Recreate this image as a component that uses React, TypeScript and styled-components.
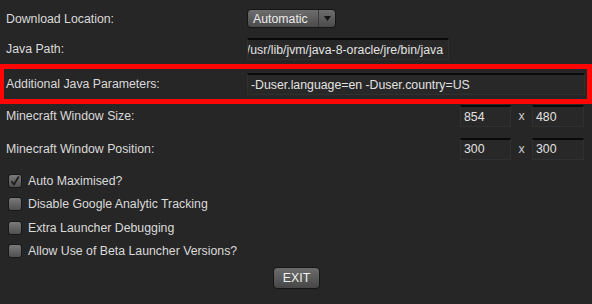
import React from "react";
import styled, { createGlobalStyle } from "styled-components";

const settings = {
  javaPath: "/usr/lib/jvm/java-8-oracle/jre/bin/java",
  javaParams: "-Duser.language=en -Duser.country=US",
  size: ["854", "480"],
  position: ["300", "300"],
};

const options = [
  { label: "Auto Maximised?", checked: true },
  { label: "Disable Google Analytic Tracking", checked: false },
  { label: "Extra Launcher Debugging", checked: false },
  { label: "Allow Use of Beta Launcher Versions?", checked: false },
];

const App = () => {
  return (
    <>
      <GlobalStyle />
      <Page>
        <Row $h={31}>
          <Label>Download Location:</Label>
          <Dropdown>
            <DropdownText>Automatic</DropdownText>
            <DropdownArrow>
              <svg width="7" height="5" viewBox="0 0 7 5">
                <path d="M0 0 H7 L3.5 5 Z" fill="#151515" />
              </svg>
            </DropdownArrow>
          </Dropdown>
        </Row>

        <Row $h={30}>
          <Label>Java Path:</Label>
          <Field $w={202} $alignEnd>
            {settings.javaPath}
          </Field>
        </Row>

        <Highlight>
          <Label>Additional Java Parameters:</Label>
          <Field $grow>{settings.javaParams}</Field>
        </Highlight>

        <Row $h={24}>
          <Label>Minecraft Window Size:</Label>
          <Pair>
            <Field $w={51}>{settings.size[0]}</Field>
            <Times>x</Times>
            <Field $w={52}>{settings.size[1]}</Field>
          </Pair>
        </Row>

        <Row $h={41}>
          <Label>Minecraft Window Position:</Label>
          <Pair>
            <Field $w={51}>{settings.position[0]}</Field>
            <Times>x</Times>
            <Field $w={52}>{settings.position[1]}</Field>
          </Pair>
        </Row>

        <CheckList>
          {options.map((o) => (
            <CheckRow key={o.label}>
              <CheckBox>
                {o.checked && (
                  <svg width="12" height="12" viewBox="0 0 12 12">
                    <path
                      d="M2.5 6.2 L5 9.5 L9.8 1.5"
                      fill="none"
                      stroke="#1c1c1c"
                      strokeWidth="1.8"
                    />
                  </svg>
                )}
              </CheckBox>
              <span>{o.label}</span>
            </CheckRow>
          ))}
        </CheckList>

        <Footer>
          <ExitButton>EXIT</ExitButton>
        </Footer>
      </Page>
    </>
  );
};

export default App;

const GlobalStyle = createGlobalStyle`
  html, body {
    margin: 0;
    padding: 0;
    background: #262626;
  }
  body {
    font-family: "Liberation Sans", Arial, Helvetica, sans-serif;
    font-size: 12.3px;
    color: #dadada;
  }
`;

const Page = styled.div`
  width: 592px;
  height: 304px;
  box-sizing: border-box;
  padding-top: 3px;
  display: flex;
  flex-direction: column;
  overflow: hidden;
`;

const Row = styled.div<{ $h: number }>`
  display: flex;
  align-items: center;
  height: ${(p) => p.$h}px;
  padding: 0 8px 0 6px;
`;

const Highlight = styled.div`
  display: flex;
  align-items: center;
  height: 40px;
  box-sizing: border-box;
  border: 5px solid #ff0505;
  border-left-width: 4px;
  padding: 0 2px 0 2px;
`;

const Label = styled.div`
  width: 241px;
  flex-shrink: 0;
`;

const Dropdown = styled.div`
  display: flex;
  align-items: stretch;
  width: 89px;
  height: 19px;
  box-sizing: border-box;
  border: 1px solid #161616;
  border-radius: 4px;
  background: linear-gradient(#6e6e6e, #4b4b4b);
  color: #ececec;
  overflow: hidden;
`;

const DropdownText = styled.div`
  flex: 1;
  display: flex;
  align-items: center;
  padding-left: 5px;
`;

const DropdownArrow = styled.div`
  width: 16px;
  display: flex;
  align-items: center;
  justify-content: center;
  border-left: 1px solid #3a3a3a;
`;

const Field = styled.div<{ $w?: number; $grow?: boolean; $alignEnd?: boolean }>`
  display: flex;
  align-items: center;
  justify-content: ${(p) => (p.$alignEnd ? "flex-end" : "flex-start")};
  ${(p) => (p.$w ? `width: ${p.$w}px;` : "")}
  ${(p) => (p.$grow ? "flex: 1;" : "")}
  height: 22px;
  box-sizing: border-box;
  padding: 0 5px 0 3px;
  background: #282828;
  border: 1px solid #303030;
  border-top: 2px solid #0a0a0a;
  color: #e2e2e2;
  white-space: nowrap;
  overflow: hidden;
`;

const Pair = styled.div`
  display: flex;
  align-items: center;
  margin-left: auto;
`;

const Times = styled.div`
  width: 21px;
  text-align: center;
  color: #cfcfcf;
`;

const CheckList = styled.div`
  display: flex;
  flex-direction: column;
`;

const CheckRow = styled.div`
  display: flex;
  align-items: center;
  gap: 6px;
  height: 23.5px;
  padding-left: 8px;
`;

const CheckBox = styled.div`
  width: 14px;
  height: 14px;
  box-sizing: border-box;
  border: 1px solid #181818;
  border-radius: 3px;
  background: linear-gradient(#7a7a7a, #505050);
  display: flex;
  align-items: center;
  justify-content: center;
`;

const Footer = styled.div`
  display: flex;
  justify-content: center;
  padding-top: 4px;
`;

const ExitButton = styled.button`
  width: 47px;
  height: 22px;
  border: 1px solid #151515;
  border-radius: 4px;
  background: linear-gradient(#6c6c6c, #464646);
  color: #f0f0f0;
  font-family: inherit;
  font-size: 12.3px;
  padding: 0;
  margin-left: 1px;
`;
